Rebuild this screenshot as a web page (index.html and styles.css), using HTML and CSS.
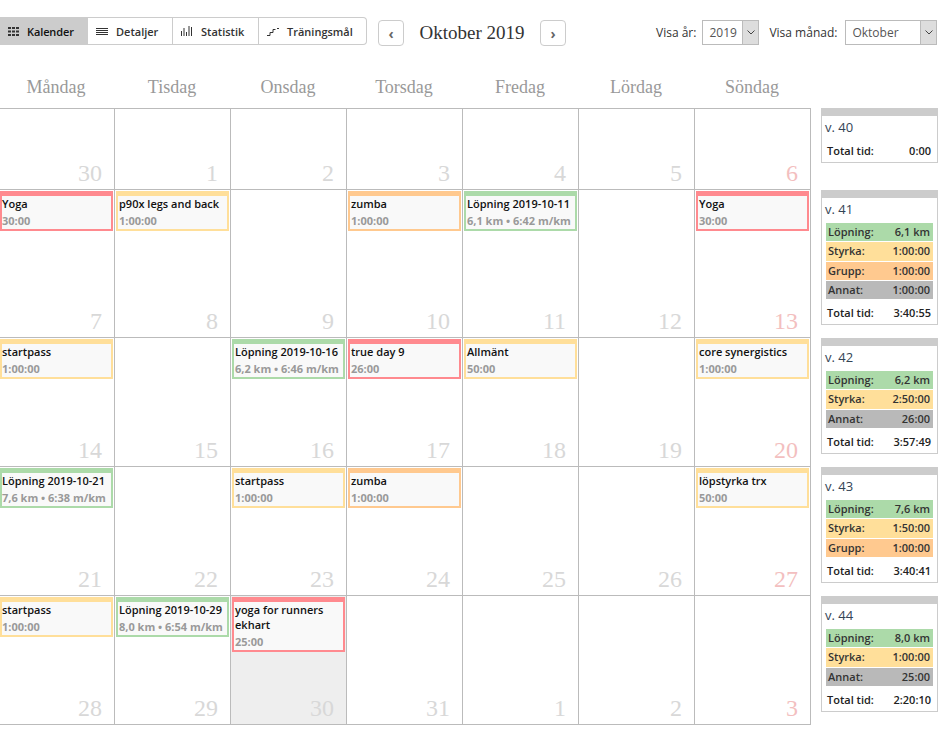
FILE: index.html
```html
<!DOCTYPE html>
<html lang="sv">
<head>
  <meta charset="UTF-8">
  <title>Kalender – Oktober 2019</title>
  <link rel="stylesheet" href="styles.css">
</head>
<body>

  <!-- Toolbar -->
  <div class="toolbar">
    <nav class="tabs">
      <a href="#" class="tab tab-cal active">
        <svg width="12" height="9" viewBox="0 0 12 9" fill="#333"><path d="M0 0h3v2H0zM4 0h3v2H4zM8 0h3v2H8zM0 3.500h3v2H0zM4 3.500h3v2H4zM8 3.500h3v2H8zM0 7h3v2H0zM4 7h3v2H4zM8 7h3v2H8z"/></svg>
        Kalender
      </a>
      <a href="#" class="tab tab-det">
        <svg width="12" height="7" viewBox="0 0 12 7" fill="#333"><path d="M0 0h12v1H0zM0 2h12v1H0zM0 4h12v1H0zM0 6h12v1H0z"/></svg>
        Detaljer
      </a>
      <a href="#" class="tab tab-stat">
        <svg width="12" height="10" viewBox="0 0 12 10" fill="#333"><path d="M0 5h1v5H0zM2.500 2h1v8h-1zM5 6h1v4H5zM7.500 0h1v10h-1zM10 1h1v9h-1z"/></svg>
        Statistik
      </a>
      <a href="#" class="tab tab-goal">
        <svg width="12" height="9" viewBox="0 0 12 9" fill="none" stroke="#333"><path d="M0 8.500h3v-3h3v-3h2.500M10 1.500h2"/></svg>
        Träningsmål
      </a>
    </nav>

    <div class="month-nav">
      <button class="arrow-btn">‹</button>
      <h1>Oktober 2019</h1>
      <button class="arrow-btn">›</button>
    </div>

    <div class="pickers">
      <span class="picker-label">Visa år:</span>
      <div class="select select-year">
        <span>2019</span>
        <i><svg width="8" height="5" viewBox="0 0 8 5" fill="none" stroke="#444"><path d="M.5.500 4 4 7.500.5"/></svg></i>
      </div>
      <span class="picker-label">Visa månad:</span>
      <div class="select select-month">
        <span>Oktober</span>
        <i><svg width="8" height="5" viewBox="0 0 8 5" fill="none" stroke="#444"><path d="M.5.500 4 4 7.500.5"/></svg></i>
      </div>
    </div>
  </div>

  <!-- Weekday names -->
  <div class="weekdays">
    <div>Måndag</div>
    <div>Tisdag</div>
    <div>Onsdag</div>
    <div>Torsdag</div>
    <div>Fredag</div>
    <div>Lördag</div>
    <div>Söndag</div>
  </div>

  <div class="content">

    <!-- Month grid -->
    <div class="month">
      <div class="day"><div class="num">30</div></div>
      <div class="day"><div class="num">1</div></div>
      <div class="day"><div class="num">2</div></div>
      <div class="day"><div class="num">3</div></div>
      <div class="day"><div class="num">4</div></div>
      <div class="day"><div class="num">5</div></div>
      <div class="day sun"><div class="num">6</div></div>

      <div class="day">
        <div class="event red"><div class="name">Yoga</div><div class="time">30:00</div></div>
        <div class="num">7</div>
      </div>
      <div class="day">
        <div class="event yellow"><div class="name">p90x legs and back</div><div class="time">1:00:00</div></div>
        <div class="num">8</div>
      </div>
      <div class="day"><div class="num">9</div></div>
      <div class="day">
        <div class="event orange"><div class="name">zumba</div><div class="time">1:00:00</div></div>
        <div class="num">10</div>
      </div>
      <div class="day">
        <div class="event green"><div class="name">Löpning 2019-10-11</div><div class="time">6,1 km • 6:42 m/km</div></div>
        <div class="num">11</div>
      </div>
      <div class="day"><div class="num">12</div></div>
      <div class="day sun">
        <div class="event red"><div class="name">Yoga</div><div class="time">30:00</div></div>
        <div class="num">13</div>
      </div>

      <div class="day">
        <div class="event yellow"><div class="name">startpass</div><div class="time">1:00:00</div></div>
        <div class="num">14</div>
      </div>
      <div class="day"><div class="num">15</div></div>
      <div class="day">
        <div class="event green"><div class="name">Löpning 2019-10-16</div><div class="time">6,2 km • 6:46 m/km</div></div>
        <div class="num">16</div>
      </div>
      <div class="day">
        <div class="event red"><div class="name">true day 9</div><div class="time">26:00</div></div>
        <div class="num">17</div>
      </div>
      <div class="day">
        <div class="event yellow"><div class="name">Allmänt</div><div class="time">50:00</div></div>
        <div class="num">18</div>
      </div>
      <div class="day"><div class="num">19</div></div>
      <div class="day sun">
        <div class="event yellow"><div class="name">core synergistics</div><div class="time">1:00:00</div></div>
        <div class="num">20</div>
      </div>

      <div class="day">
        <div class="event green"><div class="name">Löpning 2019-10-21</div><div class="time">7,6 km • 6:38 m/km</div></div>
        <div class="num">21</div>
      </div>
      <div class="day"><div class="num">22</div></div>
      <div class="day">
        <div class="event yellow"><div class="name">startpass</div><div class="time">1:00:00</div></div>
        <div class="num">23</div>
      </div>
      <div class="day">
        <div class="event orange"><div class="name">zumba</div><div class="time">1:00:00</div></div>
        <div class="num">24</div>
      </div>
      <div class="day"><div class="num">25</div></div>
      <div class="day"><div class="num">26</div></div>
      <div class="day sun">
        <div class="event yellow"><div class="name">löpstyrka trx</div><div class="time">50:00</div></div>
        <div class="num">27</div>
      </div>

      <div class="day">
        <div class="event yellow"><div class="name">startpass</div><div class="time">1:00:00</div></div>
        <div class="num">28</div>
      </div>
      <div class="day">
        <div class="event green"><div class="name">Löpning 2019-10-29</div><div class="time">8,0 km • 6:54 m/km</div></div>
        <div class="num">29</div>
      </div>
      <div class="day today">
        <div class="event red"><div class="name">yoga for runners ekhart</div><div class="time">25:00</div></div>
        <div class="num">30</div>
      </div>
      <div class="day"><div class="num">31</div></div>
      <div class="day"><div class="num">1</div></div>
      <div class="day"><div class="num">2</div></div>
      <div class="day sun"><div class="num">3</div></div>
    </div>

    <!-- Week summaries -->
    <aside class="weeks">
      <section class="week">
        <h3>v. 40</h3>
        <div class="total"><span>Total tid:</span><span>0:00</span></div>
      </section>

      <section class="week">
        <h3>v. 41</h3>
        <div class="sums">
          <div class="green"><span>Löpning:</span><span>6,1 km</span></div>
          <div class="yellow"><span>Styrka:</span><span>1:00:00</span></div>
          <div class="orange"><span>Grupp:</span><span>1:00:00</span></div>
          <div class="grey"><span>Annat:</span><span>1:00:00</span></div>
        </div>
        <div class="total"><span>Total tid:</span><span>3:40:55</span></div>
      </section>

      <section class="week">
        <h3>v. 42</h3>
        <div class="sums">
          <div class="green"><span>Löpning:</span><span>6,2 km</span></div>
          <div class="yellow"><span>Styrka:</span><span>2:50:00</span></div>
          <div class="grey"><span>Annat:</span><span>26:00</span></div>
        </div>
        <div class="total"><span>Total tid:</span><span>3:57:49</span></div>
      </section>

      <section class="week">
        <h3>v. 43</h3>
        <div class="sums">
          <div class="green"><span>Löpning:</span><span>7,6 km</span></div>
          <div class="yellow"><span>Styrka:</span><span>1:50:00</span></div>
          <div class="orange"><span>Grupp:</span><span>1:00:00</span></div>
        </div>
        <div class="total"><span>Total tid:</span><span>3:40:41</span></div>
      </section>

      <section class="week">
        <h3>v. 44</h3>
        <div class="sums">
          <div class="green"><span>Löpning:</span><span>8,0 km</span></div>
          <div class="yellow"><span>Styrka:</span><span>1:00:00</span></div>
          <div class="grey"><span>Annat:</span><span>25:00</span></div>
        </div>
        <div class="total"><span>Total tid:</span><span>2:20:10</span></div>
      </section>
    </aside>

  </div>

</body>
</html>
```
FILE: styles.css
```css
:root {
  --color-line: #bbb;
  --color-red: #ff8a8f;
  --color-yellow: #ffdf9a;
  --color-orange: #ffc98f;
  --color-green: #acdaa9;
  --color-grey: #b9b9b9;
  --serif: "Liberation Serif", serif;
}

*, *::before, *::after {
  margin: 0; padding: 0; box-sizing: border-box;
}
html, body {
  overflow: hidden;
}
body {
  width: 945px;
  height: 737px;
  font-family: "Open Sans", sans-serif;
  color: #222;
  background: #fff;
}
a {
  color: inherit;
  text-decoration: none;
}

.toolbar {
  display: flex;
  align-items: flex-start;
  height: 76px;
  padding-top: 17px;
}

.tabs {
  display: flex;
  height: 28px;
  width: 367px;
  border: 1px solid #ccc;
  border-left: none;
  border-radius: 0 4px 4px 0;
}
.tab {
  display: flex;
  align-items: center;
  gap: 8px;
  padding-left: 8px;
  font-size: 11px;
  font-weight: 600;
  color: #333;
  border-right: 1px solid #ccc;
}
.tab:last-child {
  border-right: none;
}
.tab.active {
  background: #ccc;
  color: #111;
  gap: 7px;
  letter-spacing: -.01em;
}
.tab-cal { width: 88px; }
.tab-det { width: 85px; }
.tab-stat { width: 86px; }
.tab-goal { width: 107px; }

.month-nav {
  display: flex;
  align-items: center;
  margin: 3px 0 0 11px;
  width: 188px;
  justify-content: space-between;
}
.month-nav h1 {
  font-family: var(--serif);
  font-size: 19px;
  font-weight: normal;
  color: #333;
}
.arrow-btn {
  width: 26px;
  height: 26px;
  border: 1px solid #ccc;
  border-radius: 4px;
  background: #fff;
  color: #666;
  font-size: 14px;
  font-family: inherit;
  font-weight: bold;
}

.pickers {
  display: flex;
  align-items: center;
  margin: 3px 0 0 90px;
  font-size: 12px;
  color: #333;
}
.picker-label {
  margin-right: 6px;
}
.select-year + .picker-label {
  margin-right: 8px;
}
.select {
  display: flex;
  align-items: stretch;
  justify-content: space-between;
  height: 25px;
  border: 1px solid #bbb;
  color: #555;
  font-size: 12px;
  line-height: 23px;
  padding-left: 6px;
}
.select i {
  display: flex;
  align-items: center;
  justify-content: center;
  width: 16px;
  background: #ddd;
  border-left: 1px solid #bbb;
}
.select-year {
  width: 57px;
  margin-right: 10px;
}
.select-month {
  width: 92px;
}

.weekdays {
  display: grid;
  grid-template-columns: repeat(7, 116px);
  height: 32px;
  margin-left: -2px;
  font-family: var(--serif);
  font-size: 18px;
  line-height: 22px;
  color: #999;
  text-align: center;
}

.content {
  display: flex;
  align-items: flex-start;
}

.month {
  display: grid;
  grid-template-columns: repeat(7, 116px);
  grid-template-rows: 81px 148px 129px 129px 129px;
  width: 812px;
  margin-left: -1px;
  border-top: 1px solid var(--color-line);
}
.day {
  display: flex;
  flex-direction: column;
  padding: 1px 1px 0;
  border-right: 1px solid var(--color-line);
  border-bottom: 1px solid var(--color-line);
}
.day.today {
  background: #eee;
}

.num {
  margin: auto 11px 2px 0;
  font-family: var(--serif);
  font-size: 24px;
  line-height: 28px;
  text-align: right;
  color: #d8d8d8;
}
.sun .num {
  color: #f3bfc0;
}

.event {
  background: #f9f9f9;
  border: 2px solid;
  border-top-width: 5px;
  padding: 0 0 1px 1px;
  font-size: 11px;
  line-height: 15px;
}
.day:nth-child(7n+1) .event {
  padding-left: 0;
}
.event .name {
  font-weight: 600;
  color: #111;
}
.event .time {
  margin-top: 2px;
  font-weight: 700;
  color: #999;
}
.event.red { border-color: var(--color-red); }
.event.yellow { border-color: var(--color-yellow); }
.event.orange { border-color: var(--color-orange); }
.event.green { border-color: var(--color-green); }

.weeks {
  display: grid;
  grid-template-rows: 82px 148px 129px 129px 129px;
  width: 117px;
  margin-left: 10px;
  align-items: start;
}
.week {
  border: 1px solid #ccc;
  border-top-width: 8px;
  padding: 2px 4px;
  font-size: 11px;
  line-height: 19px;
}
.week h3 {
  font-size: 13px;
  font-weight: normal;
  line-height: 19px;
  color: #345;
  margin: 0 0 4px -1px;
}
.sums {
  margin-bottom: 4px;
}
.sums div {
  display: flex;
  justify-content: space-between;
  height: 18.250px;
  margin-bottom: 1px;
  padding: 0 3px 0 2px;
  line-height: 18px;
  font-weight: 600;
  color: #333;
}
.sums .green { background: var(--color-green); }
.sums .yellow { background: var(--color-yellow); }
.sums .orange { background: var(--color-orange); }
.sums .grey { background: var(--color-grey); }

.total {
  display: flex;
  justify-content: space-between;
  padding: 0 2px 0 1px;
  font-weight: 600;
  color: #222;
}
```
